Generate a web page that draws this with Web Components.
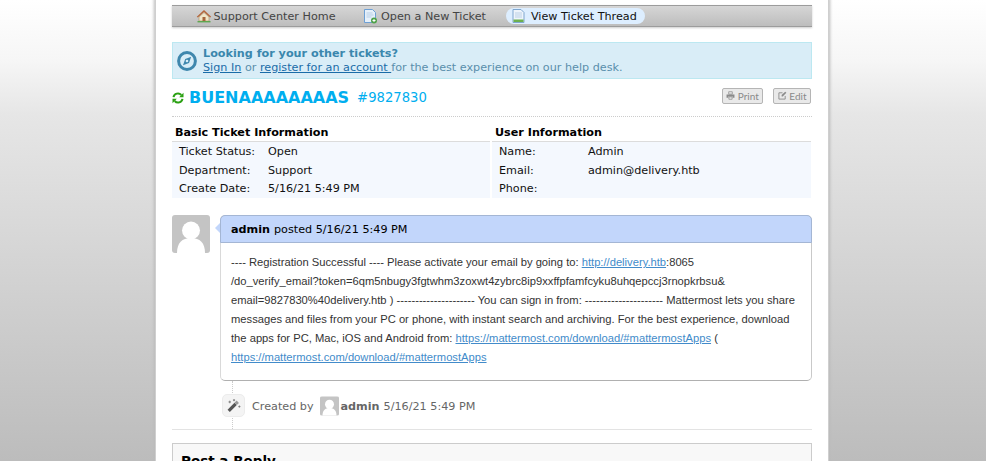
<!DOCTYPE html>
<html lang="en">
<head>
<meta charset="utf-8">
<title>View Ticket Thread</title>
<style>
  html, body { margin: 0; height: 461px; overflow: hidden; }
  body {
    background: linear-gradient(#ffffff 0, #f6f6f6 60px, #e6e6e6 115px, #bcbcbc 461px);
    font: 11.2px "DejaVu Sans", sans-serif;
    color: #000;
  }
</style>
</head>
<body>
<ticket-page>
  <nav-bar>
    <nav-item icon="home">Support Center Home</nav-item>
    <nav-item icon="new">Open a New Ticket</nav-item>
    <nav-item icon="thread" active>View Ticket Thread</nav-item>
  </nav-bar>
  <info-banner>
    <span slot="title">Looking for your other tickets?</span>
    <a href="#">Sign In</a> or <a href="#">register for an account </a>for the best experience on our help desk.
  </info-banner>
  <ticket-head subject="BUENAAAAAAAAS" number="#9827830"></ticket-head>
  <ticket-info></ticket-info>
  <thread-entry author="admin" posted="posted 5/16/21 5:49 PM">
    ---- Registration Successful ---- Please activate your email by going to: <a href="#">http://delivery.htb</a>:8065<br>/do_verify_email?token=6qm5nbugy3fgtwhm3zoxwt4zybrc8ip9xxffpfamfcyku8uhqepccj3rnopkrbsu&amp;<br>email=9827830%40delivery.htb ) --------------------- You can sign in from: --------------------- Mattermost lets you share messages and files from your PC or phone, with instant search and archiving. For the best experience, download the apps for PC, Mac, iOS and Android from: <a href="#">https://mattermost.com/download/#mattermostApps</a> ( <a href="#">https://mattermost.com/download/#mattermostApps</a>
  </thread-entry>
  <thread-event author="admin" when="5/16/21 5:49 PM"></thread-event>
  <reply-box>Post a Reply</reply-box>
</ticket-page>
<script>
// silhouette used for both avatars
const AVATAR = `<svg viewBox="0 0 38 38" width="100%" height="100%" aria-hidden="true">
  <rect width="38" height="38" fill="#c4c4c4"/>
  <circle cx="19" cy="15.5" r="9" fill="#fff"/>
  <path d="M5 38c0-10 5-15 14-15s14 5 14 15z" fill="#fff"/></svg>`;

const NAV_ICONS = {
  home: `<svg viewBox="0 0 16 16" width="16" height="16"><path d="M3 9l5-4.500L13 9v4H3z" fill="#f1e6c8" stroke="#a98d63" stroke-width=".6"/><path d="M.8 8.700 8 2l7.200 6.700-1 .9L8 4 1.800 9.600z" fill="#b5663a"/><rect x="6.500" y="9" width="3" height="4" fill="#a7663b"/><rect x="1.500" y="13" width="13" height="1.400" fill="#5ea650"/></svg>`,
  new: `<svg viewBox="0 0 16 16" width="16" height="16"><g transform="translate(-2 0)"><path d="M2.500 1.500h8l3 3v10h-11z" fill="#e6f0fa" stroke="#6d9fd4"/><path d="M4.500 5h6M4.500 7h7M4.500 9h5" stroke="#b9cfe6"/><circle cx="12" cy="12.500" r="3" fill="#4fa24a"/><path d="M10.500 12.500h3M12 11v3" stroke="#fff"/></g></svg>`,
  thread: `<svg viewBox="0 0 16 16" width="16" height="16"><g transform="translate(-1.500 0)"><path d="M2.500 1.500h8l3 3v10h-11z" fill="#eef4fb" stroke="#7ea6cf"/><path d="M4.500 5h7M4.500 7h7M4.500 9h7" stroke="#bcd0e6"/><rect x="3" y="11.500" width="10" height="2.500" fill="#6cb04f"/></g></svg>`
};

customElements.define(
  "ticket-page",
  class extends HTMLElement {
    constructor() {
      super();
      this.attachShadow({ mode: "open" }).innerHTML = `
<style>
  :host {
    display: block;
    box-sizing: border-box;
    width: 672px;
    height: 461px;
    margin-left: 156px;
    padding: 5px 16px 0;
    background: #fff;
    box-shadow: 0 0 0 1px #cfcfcf, 0 0 3px 2px #bbb;
    overflow: hidden;
  }
</style>
<slot></slot>
`;
    }
  }
);

customElements.define(
  "nav-bar",
  class extends HTMLElement {
    constructor() {
      super();
      this.attachShadow({ mode: "open" }).innerHTML = `
<style>
  :host {
    display: flex;
    align-items: center;
    gap: 13px;
    box-sizing: border-box;
    height: 22px;
    padding: 0 0 0 17px;
    background: linear-gradient(#d6d6d6, #bdbdbd);
    border-top: 1px solid #9c9c9c;
    border-bottom: 1px solid #9c9c9c;
    box-shadow: 0 1px 2px #ccc;
  }
</style>
<slot></slot>
`;
    }
  }
);

customElements.define(
  "nav-item",
  class extends HTMLElement {
    constructor() {
      super();
      this.attachShadow({ mode: "open" }).innerHTML = `
<style>
  :host {
    display: inline-flex;
    align-items: center;
    gap: 1.500px;
    height: 16px;
    padding: 0 8px 0 7px;
    color: #444;
    white-space: nowrap;
    border-radius: 8px;
  }
  :host([active]) {
    background: #ddeeff;
    color: #111;
    gap: 3px;
    padding-left: 6px;
    margin-left: -1px;
  }
  svg { display: block; }
</style>
${NAV_ICONS[this.getAttribute("icon")] || ""}<slot></slot>
`;
    }
  }
);

customElements.define(
  "info-banner",
  class extends HTMLElement {
    constructor() {
      super();
      this.attachShadow({ mode: "open" }).innerHTML = `
<style>
  :host {
    display: flex;
    align-items: center;
    gap: 6px;
    box-sizing: border-box;
    height: 37px;
    margin-top: 15px;
    padding: 0 4px;
    background: #d9edf7;
    border: 1px solid #bce8f1;
    color: #5a8fac;
    line-height: 14px;
  }
  ::slotted(a) { color: #1a6ca8; }
  .title { font-weight: bold; color: #3a87ad; }
  svg { flex: none; }
</style>
<svg viewBox="0 0 20 20" width="20" height="20"><circle cx="10" cy="10" r="8.400" fill="none" stroke="#3f87ad" stroke-width="3"/><path d="M14.200 5.800 12 12 6 14.200 8.200 8z" fill="#3f87ad"/><circle cx="10" cy="10" r="1.300" fill="#d9edf7"/></svg>
<div>
  <div class="title"><slot name="title"></slot></div>
  <div><slot></slot></div>
</div>
`;
    }
  }
);

customElements.define(
  "ticket-head",
  class extends HTMLElement {
    constructor() {
      super();
      this.attachShadow({ mode: "open" }).innerHTML = `
<style>
  :host {
    display: flex;
    align-items: center;
    box-sizing: border-box;
    height: 38px;
    border-bottom: 1px dotted #ccc;
    color: #00aeef;
  }
  svg { flex: none; margin-right: 5px; }
  b { font-size: 16px; margin-right: 8px; }
  span { font-size: 13.200px; }
  .tools { margin-left: auto; display: flex; gap: 10px; margin-right: 1px; margin-top: -4px; }
  button {
    display: inline-flex;
    align-items: center;
    gap: 2.500px;
    height: 16px;
    padding: 0 3.500px;
    font: 10px "Lato", "DejaVu Sans", sans-serif;
    color: #8a8a8a;
    background: #e9e9e9;
    border: 1px solid #b5b5b5;
    border-radius: 2px;
  }
  button svg { margin: 0; }
</style>
<svg viewBox="0 0 12 12" width="12" height="12"><path d="M1.500 5.200A4.500 4.500 0 0 1 9.300 3" fill="none" stroke="#2aa012" stroke-width="2"/><path d="M11.500 .8v4.400H7.200z" fill="#2aa012"/><path d="M10.500 6.800A4.500 4.500 0 0 1 2.700 9" fill="none" stroke="#2aa012" stroke-width="2"/><path d="M.5 11.200V6.800h4.300z" fill="#2aa012"/></svg>
<b>${this.getAttribute("subject")}</b><span>${this.getAttribute("number")}</span>
<div class="tools">
  <button><svg viewBox="0 0 10 10" width="9" height="9"><path d="M3 .8h4v2.700H3zM3.200 6.500h3.600v2.700H3.200z" fill="none" stroke="#8a8a8a" stroke-width=".8"/><path d="M.6 4h8.800v3.500H7.500V6h-5v1.500H.6z" fill="#8a8a8a"/></svg>Print</button>
  <button><svg viewBox="0 0 10 10" width="9" height="9"><path d="M8 5.500V9H1V2h4" fill="none" stroke="#8a8a8a"/><path d="M4 4.500 8 .8 9.300 2 5.300 6H4z" fill="#8a8a8a"/></svg>Edit</button>
</div>
`;
    }
  }
);

customElements.define(
  "info-list",
  class extends HTMLElement {
    constructor() {
      super();
      const rows = JSON.parse(this.getAttribute("rows"));
      const labelWidth = this.getAttribute("label-width");
      this.attachShadow({ mode: "open" }).innerHTML = `
<style>
  :host { display: block; }
  h3 {
    margin: 0;
    height: 19px;
    box-sizing: border-box;
    padding: 3px 0 0 3px;
    font-size: 11.200px;
    line-height: 14px;
    border-bottom: 1px solid #dcdcdc;
  }
  dl {
    margin: 0;
    height: 56px;
    box-sizing: border-box;
    padding: .4px 0 0 7px;
    background: #f4f8fe;
    display: grid;
    grid-template-columns: ${labelWidth}px 1fr;
    grid-auto-rows: 18.500px;
    align-items: center;
    color: #111;
  }
  dd { margin: 0; }
  dt { margin: 0; }
</style>
<h3>${this.getAttribute("heading")}</h3>
<dl>${rows.map(([k, v]) => `<dt>${k}</dt><dd>${v}</dd>`).join("")}</dl>
`;
    }
  }
);

customElements.define(
  "ticket-info",
  class extends HTMLElement {
    constructor() {
      super();
      this.attachShadow({ mode: "open" }).innerHTML = `
<style>
  :host {
    display: grid;
    grid-template-columns: 318px 1fr;
    gap: 2px;
    margin: 6px 1px 0 0;
  }
</style>
<info-list heading="Basic Ticket Information" label-width="89" rows='[["Ticket Status:","Open"],["Department:","Support"],["Create Date:","5/16/21 5:49 PM"]]'></info-list>
<info-list heading="User Information" label-width="89" rows='[["Name:","Admin"],["Email:","admin@delivery.htb"],["Phone:",""]]'></info-list>
`;
    }
  }
);

customElements.define(
  "thread-entry",
  class extends HTMLElement {
    constructor() {
      super();
      this.attachShadow({ mode: "open" }).innerHTML = `
<style>
  :host {
    display: flex;
    gap: 10px;
    margin-top: 17px;
  }
  .avatar {
    flex: none;
    width: 38px;
    height: 38px;
    border-radius: 3px;
    overflow: hidden;
  }
  .card {
    position: relative;
    flex: 1;
    min-width: 0;
    box-sizing: border-box;
    height: 166px;
    border: 1px solid #d9d9d9;
    border-bottom: 1px solid #b0b0b0;
    border-right: 1px solid #c9c9c9;
    border-radius: 5px;
  }
  .card::before {
    content: "";
    position: absolute;
    left: -6px;
    top: 7px;
    border: 5px solid transparent;
    border-left: 0;
    border-right: 5px solid #c2d6fb;
  }
  header {
    box-sizing: border-box;
    height: 28px;
    margin: -1px -1px 0;
    padding: 0 0 0 10px;
    display: flex;
    align-items: center;
    gap: 4px;
    background: #c2d6fb;
    border: 1px solid #a4b6d4;
    border-radius: 5px 5px 0 0;
  }
  .body {
    padding: 10px 10px 0;
    font: 11.200px/19.100px "Liberation Sans", sans-serif;
    color: #333;
  }
  ::slotted(a) { color: #428bca; }
</style>
<div class="avatar">${AVATAR}</div>
<div class="card">
  <header><b>${this.getAttribute("author")}</b><span>${this.getAttribute("posted")}</span></header>
  <div class="body"><slot></slot></div>
</div>
`;
    }
  }
);

customElements.define(
  "thread-event",
  class extends HTMLElement {
    constructor() {
      super();
      this.attachShadow({ mode: "open" }).innerHTML = `
<style>
  :host {
    display: flex;
    align-items: center;
    position: relative;
    height: 47px;
    padding: 1px 0 0 50px;
    border-bottom: 1px solid #e3e3e3;
    color: #666;
  }
  /* dotted line behind the badge */
  :host::before {
    content: "";
    position: absolute;
    left: 60px;
    top: 0;
    bottom: 0;
    border-left: 1px dotted #ccc;
  }
  .badge {
    position: relative;
    flex: none;
    display: grid;
    place-items: center;
    width: 23px;
    height: 23px;
    background: #f4f4f4;
    border: 1px solid #ececec;
    box-sizing: border-box;
    border-radius: 5px;
    margin-right: 7px;
  }
  .pic { width: 19px; height: 20px; border-radius: 2px; overflow: hidden; margin: 0 2px 0 6px; }
  b { margin-right: 4px; }
  b, span { padding-top: 2px; }
</style>
<div class="badge"><svg viewBox="0 0 14 14" width="15" height="15"><path d="M2.500 12 9 5.500" stroke="#555" stroke-width="3"/><path d="M9 5.500 11 3.500" stroke="#999" stroke-width="3"/><path d="M3.500 2.500v2.400M2.300 3.700h2.400M7.500 1v2M6.500 2h2M12.500 7v2M11.500 8h2" stroke="#777" stroke-width=".8"/></svg></div>
<span>Created by</span><div class="pic">${AVATAR}</div><b>${this.getAttribute("author")}</b><span>${this.getAttribute("when")}</span>
`;
    }
  }
);

customElements.define(
  "reply-box",
  class extends HTMLElement {
    constructor() {
      super();
      this.attachShadow({ mode: "open" }).innerHTML = `
<style>
  :host {
    display: block;
    box-sizing: border-box;
    margin-top: 13px;
    height: 80px;
    padding: 9px 8px;
    background: #f8f8f8;
    border: 1px solid #ccc;
    font-weight: bold;
    font-size: 13.500px;
    line-height: 17px;
  }
</style>
<slot></slot>
`;
    }
  }
);
</script>
</body>
</html>
